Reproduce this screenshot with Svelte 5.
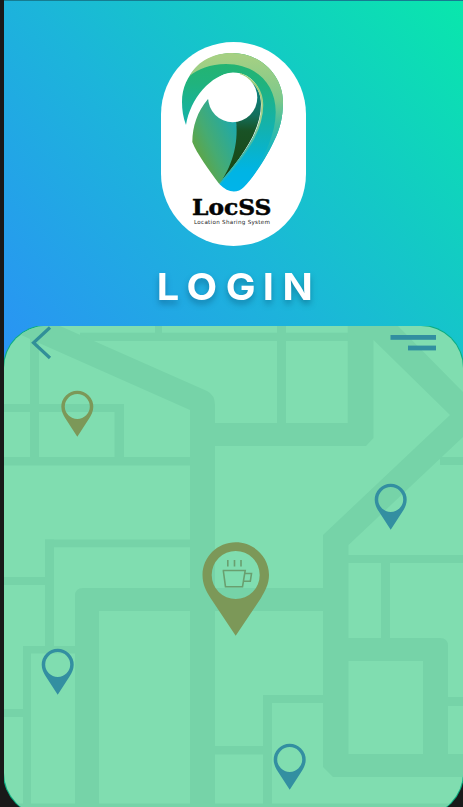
<script>
  const pins = [
    { x: 77.3, y: 406.3, tone: 'olive' },
    { x: 390.7, y: 499.3, tone: 'blue' },
    { x: 57.7, y: 664.3, tone: 'blue' },
    { x: 289.7, y: 759.3, tone: 'blue' }
  ];

  // Streets as [x, y, width, height]
  const streets = [
    [80, 332.7, 270, 8.3], [155, 326, 7, 8], [277, 326, 9, 98],
    [30, 338, 9, 120], [4, 404, 120, 8], [114.5, 404, 9.5, 54], [4, 457, 187, 8.5],
    [45, 539.5, 146, 7.7], [45, 539.5, 9, 107], [4, 577, 42, 8],
    [348, 555, 115, 8], [381, 562, 9, 77],
    [23, 646, 53, 7.5], [23, 646, 8, 161], [4, 709, 20, 8],
    [214, 746, 50, 8.5], [263, 695, 61, 8], [263, 695, 9, 112],
    [447, 697, 16, 9], [440, 457, 23, 8], [4, 803.5, 459, 4]
  ];
</script>

<main class="screen">
  <header class="hero">
    <div class="badge">
      <svg class="logo" viewBox="161 42 145 204" role="img" aria-label="LocSS">
        <defs>
          <linearGradient id="ring" x1="0" y1="0" x2="0" y2="1">
            <stop offset="0" stop-color="#25b46c" />
            <stop offset="0.22" stop-color="#20b37d" />
            <stop offset="0.55" stop-color="#12b2b0" />
            <stop offset="0.85" stop-color="#00b4e4" />
            <stop offset="1" stop-color="#00b4ea" />
          </linearGradient>
          <linearGradient id="crest" gradientUnits="userSpaceOnUse" x1="255" y1="55" x2="262" y2="172">
            <stop offset="0" stop-color="#a6d083" />
            <stop offset="0.4" stop-color="#7cc88b" />
            <stop offset="0.6" stop-color="#41bd9f" />
            <stop offset="0.8" stop-color="#18b6be" />
            <stop offset="1" stop-color="#04b4de" />
          </linearGradient>
          <linearGradient id="leaf" x1="0.15" y1="0.9" x2="0.9" y2="0.25">
            <stop offset="0" stop-color="#68a336" />
            <stop offset="0.45" stop-color="#46ab72" />
            <stop offset="1" stop-color="#20a9a8" />
          </linearGradient>
          <linearGradient id="shade" x1="0" y1="0" x2="0" y2="1">
            <stop offset="0" stop-color="#08878b" />
            <stop offset="0.35" stop-color="#126f5c" />
            <stop offset="0.5" stop-color="#195225" />
            <stop offset="1" stop-color="#174411" />
          </linearGradient>
          <linearGradient id="rim" gradientUnits="userSpaceOnUse" x1="0" y1="74" x2="0" y2="184">
            <stop offset="0" stop-color="#9fcc75" />
            <stop offset="0.4" stop-color="#a5d18d" />
            <stop offset="0.65" stop-color="#43b9a5" />
            <stop offset="1" stop-color="#18b5c9" />
          </linearGradient>
        </defs>
        <path fill="url(#ring)" d="M186 125C183 117 182 110 182 102C182 74 205 53 232.5 53S283 75 283 102C283 117 280 129 274 141C265 160 253 178 244 187C237 194 228 193 219.3 184C240 160 262 133 262 104C262 86 250 72.5 233 72.5C211 74 190 99 186 125Z" />
        <path fill="url(#crest)" d="M189.5 76C198 60 215 53 232.5 53C260 53 283 75 283 102C283 117 280 129 274 141C267 157 257 170 249 181C261 162 275.7 137 275.7 112C275.7 82 254 64 226 64C210 64 198 69 189.5 76Z" />
        <path fill="url(#shade)" d="M236 121L248 78C256 84 261 93 261 104C261 134 237 162 219.3 184C229 168 237 145 236 121Z" />
        <path fill="none" stroke="url(#rim)" stroke-width="1.9" d="M240 74C254 79 262.3 91 262.3 105C262.3 133 243 157 220 183.5" />
        <path fill="url(#leaf)" d="M208 99C197 112 192.7 126 192.3 142C197 154 209 170 219.3 184C231 168 239 145 236 121Z" />
        <circle cx="232.7" cy="97.6" r="24.6" fill="#fff" />
        <text class="brand" x="192" y="214.6" textLength="79.5" lengthAdjust="spacingAndGlyphs">LocSS</text>
        <text class="tagline" x="194" y="223.6" textLength="76" lengthAdjust="spacing">Location Sharing System</text>
      </svg>
    </div>
    <h1>
      <svg class="title" viewBox="138.5 262 190 52">
        <text transform="scale(1.06 1)" x="147.5 175.4 212.4 247.5 266.1" y="300">LOGIN</text>
      </svg>
    </h1>
  </header>

  <section class="panel">
    <svg class="map" viewBox="4 326 459 489">
      <g class="road">
        {#each streets as [x, y, width, height]}
          <rect {x} {y} {width} {height} />
        {/each}
        <path d="M4 326H60L207 391Q215 395 215 405V423H347.7V326H398L463 392V437L348.5 545V638H440Q448 638 448 646V754H463V777H333L323 767V611H215V807H190V410L39 343L19 334Z
          M373.5 340V438L366 446H215V588H323V535L450 415Z
          M348.5 661V754H423V661Z" fill-rule="evenodd" />
        <path d="M75 807V596Q75 588 83 588H191V611H99V807Z" />
      </g>

      <g class="controls">
        <path d="M50 327.5L33.5 342.7L50 358" />
        <rect x="390.5" y="335" width="45.5" height="4.8" />
        <rect x="408" y="345.6" width="28" height="4.8" />
      </g>

      {#each pins as pin}
        <path
          class={pin.tone}
          fill-rule="evenodd"
          transform="translate({pin.x} {pin.y})"
          d="M0-15.5A16 16 0 0 1 16 .5C16 5 14 9 12 12L0 30.5L-12 12C-14 9-16 5-16 .5A16 16 0 0 1 0-15.5ZM0-12.3A12.5 12.5 0 1 0 0 12.7A12.5 12.5 0 1 0 0-12.3Z"
        />
      {/each}

      <path class="olive" fill-rule="evenodd" d="M235.7 542.3C254 542.3 269 557 269 575C269 584 265 591 261 598L235.7 635.8L210.5 598C206 591 202.5 584 202.5 575C202.5 557 217.5 542.3 235.7 542.3ZM235.7 551A24 24 0 1 0 235.7 599A24 24 0 1 0 235.7 551Z" />
      <path class="cup" d="M222.7 570.5H245.2L242.5 586.8H225.5L223.3 570.5M245 573.5H251.5L250.3 581.3H244M227.8 560V566.5M234.5 560V566.5M241 560V566.5" />
    </svg>
  </section>
</main>

<style>
  :global(body) { margin: 0; background: #191919; }
  .screen {
    box-sizing: border-box;
    width: 463px;
    height: 807px;
    padding-left: 4px;
    overflow: hidden;
    background: #191919;
  }
  .hero {
    box-sizing: border-box;
    height: 368px;
    padding-top: 41px;
    display: flex;
    flex-direction: column;
    align-items: center;
    border-top: 1px solid #167c91;
    background: linear-gradient(49deg, #2a92f5 0%, #1cb5da 44%, #13cac5 68%, #09e7ac 100%);
  }
  .badge {
    width: 145px;
    height: 204px;
    overflow: hidden;
    border-radius: 73px;
    background: #fff;
  }
  .logo, .title, .map { display: block; }
  .logo { width: 145px; height: 204px; }
  .brand {
    font: bold 23.2px "DejaVu Serif", serif;
    fill: #050505;
    stroke: #050505;
    stroke-width: 0.5;
  }
  .tagline { font: 5.6px "DejaVu Sans", sans-serif; fill: #222; }
  h1 { margin: 16px 0 0; line-height: 0; }
  .title { width: 190px; height: 52px; overflow: visible; }
  .title text {
    font: 700 37.5px Inter, sans-serif;
    fill: #fff;
    filter: drop-shadow(0 4px 3px rgb(0 50 80 / 0.35));
  }
  .panel {
    position: relative;
    margin-top: -42px;
    height: 489px;
    overflow: hidden;
    border-radius: 42px;
    background: #80ddb0;
    box-shadow: 0 0 0 1px #0cad81;
    clip-path: inset(0 0 0 0);
  }
  .map { width: 459px; height: 489px; }
  .road { fill: #76d3a8; }
  .controls { fill: #318fa0; }
  .controls path { fill: none; stroke: #318f98; stroke-width: 3.2; }
  .olive { fill: #7c9858; }
  .blue { fill: #338fa1; }
  .cup { fill: none; stroke: #699f6f; stroke-width: 1.6; }
</style>
